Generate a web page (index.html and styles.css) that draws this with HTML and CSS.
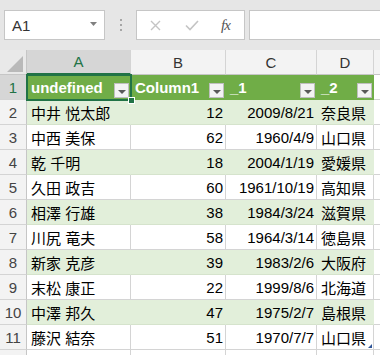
FILE: index.html
```html
<!DOCTYPE html>
<html lang="ja">
<head>
    <meta charset="UTF-8">
    <title>Sheet</title>
    <link rel="stylesheet" href="styles.css">
</head>
<body>
    <div class="toolbar">
        <div class="namebox">
            <span>A1</span>
            <svg class="name-arrow" width="7" height="4" viewBox="0 0 7 4"><path d="M0 0H7L3.5 4Z" fill="#808080"/></svg>
        </div>
        <div class="dots"><i></i><i></i><i></i></div>
        <div class="fxbox">
            <svg class="fx-cancel" width="11" height="11" viewBox="0 0 11 11"><path d="M1 1L10 10M10 1L1 10" stroke="#c4c4c4" stroke-width="1.4" fill="none"/></svg>
            <svg class="fx-ok" width="14" height="11" viewBox="0 0 14 11"><path d="M1 5.5L5 9.5L13 1" stroke="#c4c4c4" stroke-width="1.6" fill="none"/></svg>
            <span class="fx-label">fx</span>
        </div>
        <div class="formula"></div>
    </div>

    <div class="sheet">
        <div class="corner"><span class="corner-tri"></span></div>
        <div class="colhead selected">A</div>
        <div class="colhead">B</div>
        <div class="colhead">C</div>
        <div class="colhead">D</div>
        <div class="colhead blank"></div>

        <div class="rowhead selected">1</div>
        <div class="cell head"><span>undefined</span><span class="filter"></span></div>
        <div class="cell head"><span>Column1</span><span class="filter"></span></div>
        <div class="cell head"><span>_1</span><span class="filter"></span></div>
        <div class="cell head"><span>_2</span><span class="filter"></span></div>
        <div class="cell"></div>

        <div class="rowhead">2</div>
        <div class="cell band">中井 悦太郎</div>
        <div class="cell band num">12</div>
        <div class="cell band num">2009/8/21</div>
        <div class="cell band">奈良県</div>
        <div class="cell"></div>

        <div class="rowhead">3</div>
        <div class="cell">中西 美保</div>
        <div class="cell num">62</div>
        <div class="cell num">1960/4/9</div>
        <div class="cell">山口県</div>
        <div class="cell"></div>

        <div class="rowhead">4</div>
        <div class="cell band">乾 千明</div>
        <div class="cell band num">18</div>
        <div class="cell band num">2004/1/19</div>
        <div class="cell band">愛媛県</div>
        <div class="cell"></div>

        <div class="rowhead">5</div>
        <div class="cell">久田 政吉</div>
        <div class="cell num">60</div>
        <div class="cell num">1961/10/19</div>
        <div class="cell">高知県</div>
        <div class="cell"></div>

        <div class="rowhead">6</div>
        <div class="cell band">相澤 行雄</div>
        <div class="cell band num">38</div>
        <div class="cell band num">1984/3/24</div>
        <div class="cell band">滋賀県</div>
        <div class="cell"></div>

        <div class="rowhead">7</div>
        <div class="cell">川尻 竜夫</div>
        <div class="cell num">58</div>
        <div class="cell num">1964/3/14</div>
        <div class="cell">徳島県</div>
        <div class="cell"></div>

        <div class="rowhead">8</div>
        <div class="cell band">新家 克彦</div>
        <div class="cell band num">39</div>
        <div class="cell band num">1983/2/6</div>
        <div class="cell band">大阪府</div>
        <div class="cell"></div>

        <div class="rowhead">9</div>
        <div class="cell">末松 康正</div>
        <div class="cell num">22</div>
        <div class="cell num">1999/8/6</div>
        <div class="cell">北海道</div>
        <div class="cell"></div>

        <div class="rowhead">10</div>
        <div class="cell band">中澤 邦久</div>
        <div class="cell band num">47</div>
        <div class="cell band num">1975/2/7</div>
        <div class="cell band">島根県</div>
        <div class="cell"></div>

        <div class="rowhead">11</div>
        <div class="cell">藤沢 結奈</div>
        <div class="cell num">51</div>
        <div class="cell num">1970/7/7</div>
        <div class="cell last">山口県</div>
        <div class="cell"></div>

        <div class="rowhead"></div>
        <div class="cell"></div>
        <div class="cell"></div>
        <div class="cell"></div>
        <div class="cell"></div>
        <div class="cell"></div>

        <div class="selection"><span class="handle"></span></div>
    </div>
</body>
</html>
```

FILE: styles.css
```css
* {
    margin: 0;
    padding: 0;
    box-sizing: border-box;
}

body {
    background-color: #fff;
    color: #000;
    font-family: "Liberation Sans", "Noto Sans CJK JP", sans-serif;
    font-size: 15px;
    overflow: hidden;
}

/* formula bar */
.toolbar {
    height: 50px;
    background-color: #e6e6e6;
    display: flex;
    align-items: flex-start;
    padding-top: 10px;
}

.namebox {
    margin-left: 4px;
    width: 101px;
    height: 30px;
    background-color: #fff;
    border: 1px solid #c6c6c6;
    display: flex;
    align-items: center;
    justify-content: space-between;
    padding: 0 7px 0 7px;
    color: #333;
}

.name-arrow {
    margin-top: -3px;
}

.dots {
    margin-left: 15px;
    height: 30px;
    display: flex;
    flex-direction: column;
    justify-content: center;
    gap: 3px;
}

.dots i {
    display: block;
    width: 2px;
    height: 2px;
    background-color: #a6a6a6;
}

.fxbox {
    margin-left: 14px;
    width: 109px;
    height: 30px;
    background-color: #fff;
    border: 1px solid #c6c6c6;
    display: flex;
    align-items: center;
    padding-left: 13px;
}

.fx-ok {
    margin-left: 24px;
}

.fx-label {
    margin-left: 22px;
    font-family: "Liberation Serif", serif;
    font-style: italic;
    font-size: 15px;
    color: #555;
    letter-spacing: -1px;
}

.formula {
    margin-left: 4px;
    flex: 1;
    margin-right: -6px;
    height: 30px;
    background-color: #fff;
    border: 1px solid #c6c6c6;
}

/* grid */
.sheet {
    position: relative;
    display: grid;
    grid-template-columns: 27px 104px 95px 91px 57px 1fr;
    grid-auto-rows: 25px;
}

.corner {
    background-color: #e9e9e9;
    border-right: 1px solid #c6c6c6;
    border-bottom: 1px solid #c6c6c6;
    position: relative;
}

.corner-tri {
    position: absolute;
    right: 3px;
    bottom: 2px;
    width: 0;
    height: 0;
    border-left: 16px solid transparent;
    border-bottom: 16px solid #b9b9b9;
}

.colhead {
    background-color: #f3f3f3;
    border-right: 1px solid #d4d4d4;
    border-bottom: 1px solid #c6c6c6;
    display: flex;
    align-items: center;
    justify-content: center;
    color: #333;
}

.colhead.selected {
    background-color: #d6d6d6;
    color: #217346;
    border-bottom: 2px solid #217346;
}

.colhead.blank {
    border-right: none;
}

.rowhead {
    background-color: #f3f3f3;
    border-right: 1px solid #c6c6c6;
    border-bottom: 1px solid #d4d4d4;
    display: flex;
    align-items: center;
    justify-content: center;
    color: #444;
}

.rowhead.selected {
    background-color: #d6d6d6;
    color: #217346;
}

.cell {
    border-right: 1px solid #d4d4d4;
    border-bottom: 1px solid #d4d4d4;
    display: flex;
    align-items: center;
    padding: 0 4px;
    white-space: nowrap;
    overflow: hidden;
}

.cell.num {
    justify-content: flex-end;
    padding-right: 2px;
}

.cell.band {
    background-color: #e2efda;
    border-right-color: #e2efda;
    border-bottom-color: #d5e3cc;
}

.cell.head {
    background-color: #70ad47;
    border-right-color: #70ad47;
    border-bottom-color: #70ad47;
    color: #fff;
    font-weight: bold;
    justify-content: space-between;
    padding-right: 1px;
}

.filter {
    align-self: flex-end;
    margin-bottom: 1px;
    width: 15px;
    height: 15px;
    flex-shrink: 0;
    background-color: #f3f3f3;
    border: 1px solid #bfbfbf;
    display: flex;
    align-items: center;
    justify-content: center;
}

.filter::after {
    content: "";
    margin-top: 2px;
    border-left: 4px solid transparent;
    border-right: 4px solid transparent;
    border-top: 4px solid #595959;
}

.cell.last {
    position: relative;
}

.cell.last::after {
    content: "";
    position: absolute;
    right: 1px;
    bottom: 1px;
    border-left: 4px solid transparent;
    border-bottom: 4px solid #2f5597;
}

.selection {
    position: absolute;
    left: 26px;
    top: 24px;
    width: 106px;
    height: 27px;
    border: 2px solid #217346;
    pointer-events: none;
}

.handle {
    position: absolute;
    right: -5px;
    bottom: -5px;
    width: 7px;
    height: 7px;
    background-color: #217346;
    border: 1px solid #fff;
}
```
